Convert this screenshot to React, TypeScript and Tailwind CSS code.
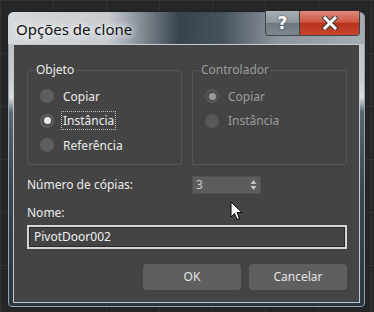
const font = { fontFamily: '"Noto Sans", "Open Sans", sans-serif' }

function Radio({ label, checked, disabled, focused }: { label: string; checked?: boolean; disabled?: boolean; focused?: boolean }) {
  return (
    <div className="flex items-center h-[24.5px]">
      <span className={`flex items-center justify-center w-[14px] h-[14px] rounded-full ${disabled ? 'bg-[#585858]' : 'bg-[#5e5e5e]'}`}>
        {checked && (
          <span className="flex items-center justify-center w-[10px] h-[10px] rounded-full bg-[#494949]">
            <span className={`w-[7px] h-[7px] rounded-full ${disabled ? 'bg-[#9a9a9a]' : 'bg-[#ececec]'}`} />
          </span>
        )}
      </span>
      <span className={`ml-[8px] px-[1px] leading-[17px] ${focused ? 'outline outline-1 outline-dotted outline-[#bdbdbd]' : ''} ${disabled ? 'text-[#9c9c9c]' : 'text-[#ececec]'}`}>
        {label}
      </span>
    </div>
  )
}

function Group({ title, disabled, children }: { title: string; disabled?: boolean; children: React.ReactNode }) {
  return (
    <div className="relative w-[155px] h-[95px] border border-[#575757] rounded-[3px] pt-[13px] pl-[12px]">
      <span className={`absolute left-[6px] top-[-10px] px-[2px] bg-[#444444] leading-[18px] ${disabled ? 'text-[#9c9c9c]' : 'text-[#ececec]'}`}>{title}</span>
      {children}
    </div>
  )
}

export default function App() {
  return (
    <div className="relative w-[374px] h-[312px] overflow-hidden bg-[#262626] bg-[linear-gradient(90deg,#333_1px,transparent_1px),linear-gradient(#333_1px,transparent_1px)] bg-[size:53px_53px] text-[12px]" style={font}>
      {/* window */}
      <div className="absolute left-[7px] top-[11px] w-[359px] h-[297px] rounded-t-[7px] rounded-b-[5px] border border-[#1c232b] bg-[linear-gradient(180deg,#b8bec4_0%,#c6cbd0_22%,#d9dde0_29%,#5b6672_34%,#3a4653_60%,#2b3643_100%)] shadow-[0_0_0_1px_#9aa3ab_inset]">
        {/* title bar */}
        <div className="relative h-[32px] rounded-t-[6px] bg-[linear-gradient(90deg,rgba(214,218,221,0.95)_0%,rgba(200,205,209,0.9)_28%,rgba(48,60,72,0.95)_48%,rgba(58,70,82,0.9)_60%,rgba(120,130,139,0.7)_75%,rgba(150,158,165,0.6)_100%)]">
          <span className="absolute left-[8px] top-[7px] text-[15px] leading-[20px] text-[#111] [text-shadow:0_0_6px_#fff,0_0_10px_#fff]">Opções de clone</span>
          <div className="absolute right-[5px] top-[-1px] flex h-[25px] rounded-b-[4px] border border-[#3c444c] border-t-0 overflow-hidden">
            <div className="w-[34px] flex items-center justify-center bg-[linear-gradient(180deg,#a9b0b6_0%,#8d959c_48%,#6f7880_52%,#7f878e_100%)] border-r border-[#3c444c]">
              <span className="text-[17px] font-bold leading-none text-white [text-shadow:0_0_2px_#333]" style={{ fontFamily: '"DejaVu Sans", sans-serif' }}>?</span>
            </div>
            <div className="w-[59px] flex items-center justify-center bg-[linear-gradient(180deg,#e0887a_0%,#d05a45_45%,#b8321c_52%,#c9462e_100%)]">
              <svg width="16" height="14" viewBox="0 0 16 14">
                <path d="M3 2 L13 12 M13 2 L3 12" stroke="#3a3a3a" strokeWidth="5" strokeLinecap="square" />
                <path d="M3 2 L13 12 M13 2 L3 12" stroke="#fff" strokeWidth="3" strokeLinecap="square" />
              </svg>
            </div>
          </div>
        </div>
        {/* client area */}
        <div className="mx-[5px] h-[259px] border border-[#c2c8ce] bg-[#444444] pl-[13px] pr-[12px] pt-[25px]">
          <div className="flex gap-[10px]">
            <Group title="Objeto">
              <Radio label="Copiar" />
              <Radio label="Instância" checked focused />
              <Radio label="Referência" />
            </Group>
            <Group title="Controlador" disabled>
              <Radio label="Copiar" checked disabled />
              <Radio label="Instância" disabled />
            </Group>
          </div>
          <div className="flex items-center mt-[11px] h-[18px]">
            <span className="w-[165px] text-[#ececec]">Número de cópias:</span>
            <div className="flex items-center justify-between w-[69px] h-[18px] bg-[#5c5c5c] border border-[#525252] pl-[3px] pr-[3px]">
              <span className="text-[#cfcfcf] leading-none">3</span>
              <svg width="7" height="12" viewBox="0 0 7 12">
                <path d="M3.5 1 L6.5 5 L0.5 5 Z M3.5 11 L6.5 7 L0.5 7 Z" fill="#c4c4c4" />
              </svg>
            </div>
          </div>
          <div className="mt-[10px] text-[#ececec] leading-[17px]">Nome:</div>
          <div className="mt-[4px] h-[24px] border-2 border-[#d4d4d4] bg-[#444444] shadow-[inset_0_0_0_1px_#2a2a2a] pl-[5px] flex items-center text-[#f0f0f0]">
            PivotDoor002
          </div>
          <div className="flex justify-end gap-[8px] mt-[15px]">
            <button className="w-[98px] h-[26px] rounded-[4px] bg-[#5f5f5f] text-[#e4e4e4]">OK</button>
            <button className="w-[98px] h-[26px] rounded-[4px] bg-[#5f5f5f] text-[#e4e4e4]">Cancelar</button>
          </div>
        </div>
      </div>
      {/* mouse cursor */}
      <svg className="absolute left-[230px] top-[201px]" width="13" height="20" viewBox="0 0 13 20">
        <path d="M1 1 L1 16 L4.5 12.5 L7 18.5 L9.5 17.5 L7 11.5 L12 11.5 Z" fill="#fff" stroke="#000" strokeWidth="1" strokeLinejoin="round" />
      </svg>
    </div>
  )
}
